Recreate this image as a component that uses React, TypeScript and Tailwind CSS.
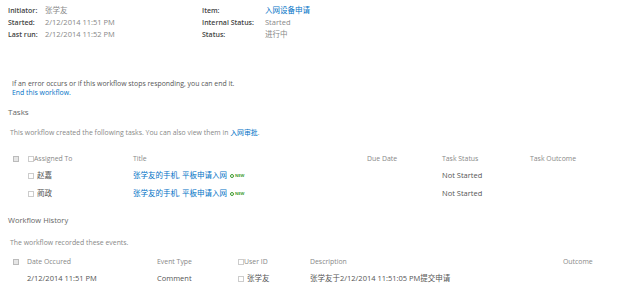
import React from 'react';

const Box = ({ filled = false }: { filled?: boolean }) => (
    <span
        className={`inline-block w-[6px] h-[6px] border ${filled ? 'border-[#bbb] bg-[#e6e6e6]' : 'border-[#ccc] bg-white'} shrink-0`}
    />
);

const NewBadge = () => (
    <span className="inline-flex items-center gap-[1px] ml-[3px] text-[#3a9b2f] text-[4px] font-bold leading-none">
        <span className="inline-block w-[4px] h-[4px] rounded-full border border-[#3a9b2f]" />
        NEW
    </span>
);

const App = () => {
    const meta = [
        { label: 'Initiator:', value: '张学友' },
        { label: 'Started:', value: '2/12/2014 11:51 PM' },
        { label: 'Last run:', value: '2/12/2014 11:52 PM' }
    ];
    const meta2 = [
        { label: 'Item:', value: '入网设备申请', link: true },
        { label: 'Internal Status:', value: 'Started' },
        { label: 'Status:', value: '进行中' }
    ];
    const tasks = ['赵嘉', '蔺政'];

    return (
        <div
            className="w-[624px] h-[293px] bg-white overflow-hidden text-[#555]"
            style={{ fontFamily: '"Open Sans", "Noto Sans CJK SC", sans-serif' }}
        >
            {/* Header info */}
            <div className="flex pt-[5px]">
                <div className="w-[202px] pl-[8px]">
                    {meta.map((m) => (
                        <div key={m.label} className="flex h-[12px] items-center">
                            <span className="w-[37px] text-[7px] font-semibold text-[#444]">{m.label}</span>
                            <span className="text-[7.5px] text-[#888]">{m.value}</span>
                        </div>
                    ))}
                </div>
                <div>
                    {meta2.map((m) => (
                        <div key={m.label} className="flex h-[12px] items-center">
                            <span className="w-[63px] text-[7px] font-semibold text-[#444]">{m.label}</span>
                            <span className={`text-[7.5px] ${m.link ? 'text-[#0072c6]' : 'text-[#888]'}`}>{m.value}</span>
                        </div>
                    ))}
                </div>
            </div>

            {/* Terminate */}
            <div className="pl-[12px] mt-[38px] text-[6.9px] leading-[9px]">
                <div className="text-[#555]">If an error occurs or if this workflow stops responding, you can end it.</div>
                <div className="text-[#0072c6]">End this workflow.</div>
            </div>

            {/* Tasks */}
            <div className="pl-[8px] mt-[9px] text-[8px] leading-[12px] text-[#666]">Tasks</div>
            <div className="pl-[10px] mt-[10px] text-[6.9px] leading-[10px] text-[#888]">
                This workflow created the following tasks. You can also view them in{' '}
                <span className="text-[#0072c6]">入网审批</span>.
            </div>

            <div className="mt-[14px] text-[6.9px]">
                <div className="grid grid-cols-[28px_105px_234px_75px_88px_1fr] h-[14px] items-center text-[#888]">
                    <span className="pl-[13px] flex"><Box filled /></span>
                    <span className="flex items-center"><Box />Assigned To</span>
                    <span>Title</span>
                    <span>Due Date</span>
                    <span>Task Status</span>
                    <span>Task Outcome</span>
                </div>
                {tasks.map((t, i) => (
                    <div key={t} className={`grid grid-cols-[28px_105px_234px_75px_88px_1fr] h-[18px] items-center ${i === 0 ? 'mt-[1px]' : ''}`}>
                        <span />
                        <span className="flex items-center gap-[3px] text-[7.5px] text-[#555]"><Box />{t}</span>
                        <span className="flex items-center text-[7.5px] text-[#0072c6]">
                            张学友的手机, 平板申请入网
                            <NewBadge />
                        </span>
                        <span />
                        <span className="text-[7.5px] text-[#555]">Not Started</span>
                        <span />
                    </div>
                ))}
            </div>

            {/* Workflow history */}
            <div className="pl-[8px] mt-[11px] text-[7.5px] leading-[12px] text-[#666]">Workflow History</div>
            <div className="pl-[10px] mt-[12px] text-[6.9px] leading-[10px] text-[#888]">The workflow recorded these events.</div>

            <div className="mt-[7px] text-[6.9px]">
                <div className="grid grid-cols-[27px_130px_81px_72px_253px_1fr] h-[14px] items-center text-[#888]">
                    <span className="pl-[13px] flex"><Box filled /></span>
                    <span>Date Occured</span>
                    <span>Event Type</span>
                    <span className="flex items-center"><Box />User ID</span>
                    <span>Description</span>
                    <span>Outcome</span>
                </div>
                <div className="grid grid-cols-[27px_130px_81px_72px_253px_1fr] h-[20px] items-center text-[7.5px] text-[#555]">
                    <span />
                    <span>2/12/2014 11:51 PM</span>
                    <span>Comment</span>
                    <span className="flex items-center gap-[3px]"><Box />张学友</span>
                    <span>张学友于2/12/2014 11:51:05 PM提交申请</span>
                    <span />
                </div>
            </div>
        </div>
    );
};

export default App;
